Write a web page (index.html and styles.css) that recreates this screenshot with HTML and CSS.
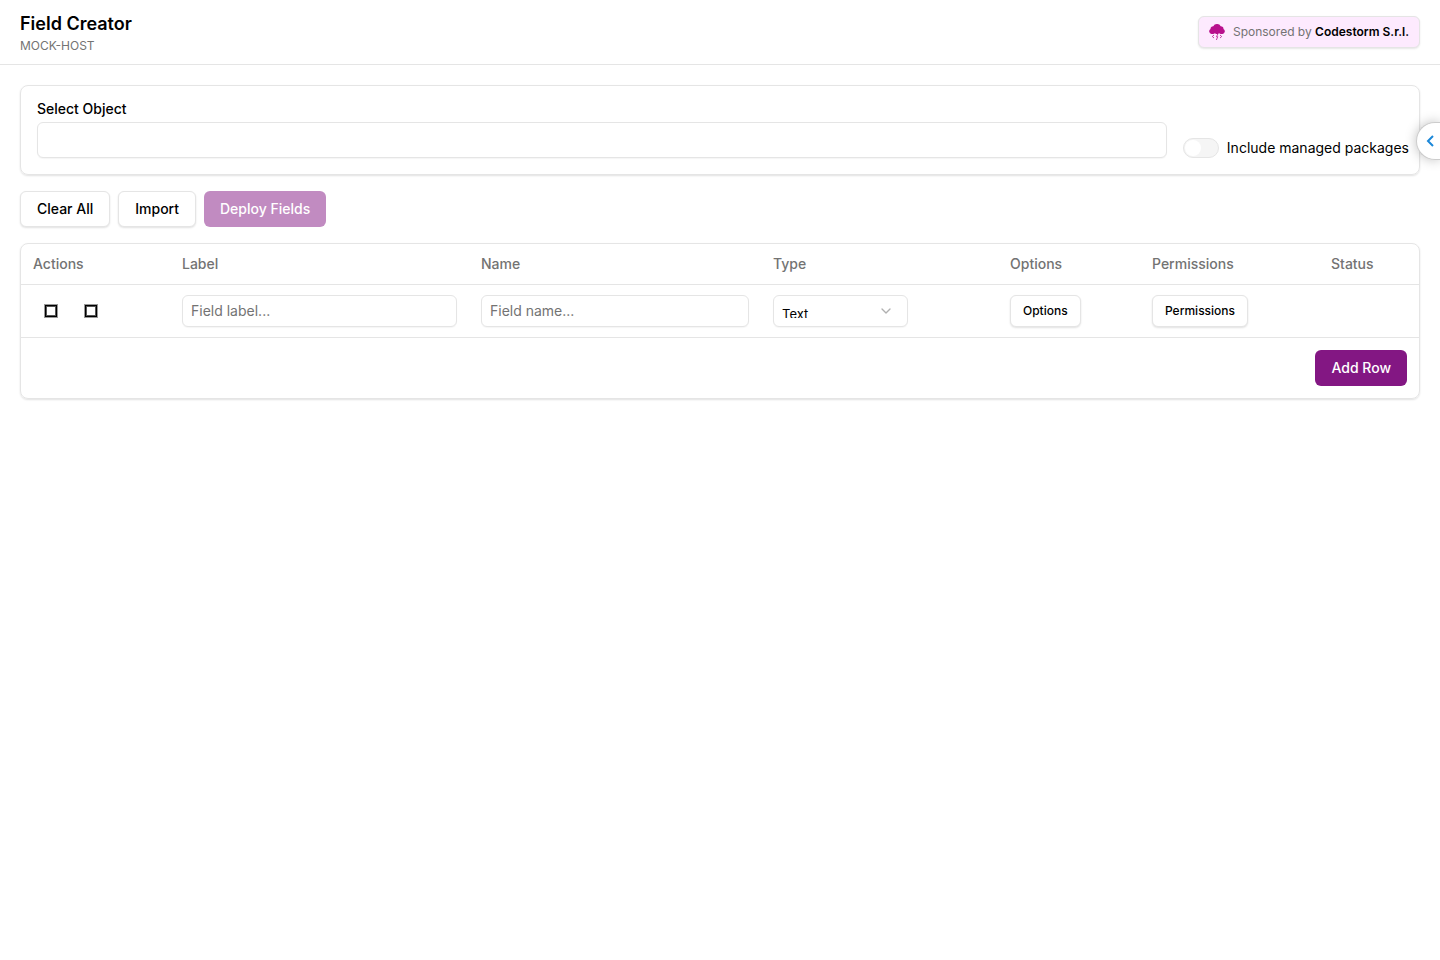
FILE: index.html
```html
<!DOCTYPE html>
<html lang="en">
<head>
<meta charset="utf-8">
<title>Field Creator</title>
<link rel="stylesheet" href="styles.css">
</head>
<body>
<header class="topbar">
  <div>
    <h1 class="title">Field Creator</h1>
    <p class="host">MOCK-HOST</p>
  </div>
  <a class="sponsor" href="#">
    <svg class="sponsor-logo" viewBox="0 0 16 16" aria-hidden="true">
      <path fill="#b8108c" d="M2.500 10A2.700 2.700 0 0 1 1.500 5 2.800 2.800 0 0 1 4.300 2.300 4 4 0 0 1 8 0a4 4 0 0 1 3.700 2.200A2.800 2.800 0 0 1 14.500 5a2.700 2.700 0 0 1-1 5h-1.800L10 9.300 9 10H7L6 9.300 4.300 10z"/>
      <path fill="none" stroke="#b8108c" stroke-width=".8" d="M5 11 3.300 12.500 5 14M11 11l1.700 1.500L11 14M8.800 10 7.500 12.700h1.200L7.400 16"/>
    </svg>
    <span>Sponsored by <strong>Codestorm S.r.l.</strong></span>
  </a>
</header>
<main class="content">
  <section class="card object-card">
    <div class="object-field">
      <label class="field-label" for="object">Select Object</label>
      <input class="input" id="object" type="text">
    </div>
    <label class="switch-label"><input class="switch" type="checkbox" role="switch">Include managed packages</label>
  </section>
  <div class="toolbar">
    <button class="btn" type="button">Clear All</button>
    <button class="btn" type="button">Import</button>
    <button class="btn btn-primary" type="button" disabled>Deploy Fields</button>
  </div>
  <section class="card">
    <table class="fields">
      <colgroup>
        <col class="col-actions"><col class="col-label"><col class="col-name"><col class="col-type"><col class="col-options"><col class="col-permissions"><col class="col-status">
      </colgroup>
      <thead>
        <tr><th>Actions</th><th>Label</th><th>Name</th><th>Type</th><th>Options</th><th>Permissions</th><th>Status</th></tr>
      </thead>
      <tbody>
        <tr>
          <td>
            <div class="row-actions">
              <button class="icon-btn" type="button" aria-label="Clone row"><span class="glyph"></span></button>
              <button class="icon-btn" type="button" aria-label="Delete row"><span class="glyph"></span></button>
            </div>
          </td>
          <td><input class="input input-sm" type="text" placeholder="Field label..." aria-label="Field label"></td>
          <td><input class="input input-sm" type="text" placeholder="Field name..." aria-label="Field name"></td>
          <td>
            <div class="select-wrap">
              <select class="select" aria-label="Field type"><option>Text</option></select>
              <svg class="chevron" viewBox="0 0 24 24" aria-hidden="true"><path d="m6 9 6 6 6-6"/></svg>
            </div>
          </td>
          <td><button class="btn btn-sm" type="button">Options</button></td>
          <td><button class="btn btn-sm" type="button">Permissions</button></td>
          <td></td>
        </tr>
      </tbody>
    </table>
    <div class="card-footer"><button class="btn btn-primary" type="button">Add Row</button></div>
  </section>
</main>
<button class="side-tab" type="button" aria-label="Open panel">
  <svg class="side-arrow" viewBox="0 0 10 14" aria-hidden="true"><path d="M7 2 2 7l5 5"/></svg>
</button>
</body>
</html>
```
FILE: styles.css
```css
* { box-sizing: border-box; }
body {
  margin: 0;
  background: #fff;
  color: #000;
  font: 14px/20px Inter, "Liberation Sans", sans-serif;
}
button, input, select { font: inherit; color: inherit; }
.topbar {
  display: flex;
  align-items: center;
  justify-content: space-between;
  padding: 10px 20px;
  border-bottom: 1px solid #e5e5e5;
}
.title { margin: 0; font-size: 18px; line-height: 28px; font-weight: 600; }
.host { margin: 0; font-size: 12px; line-height: 16px; color: #737373; }
.sponsor {
  display: flex;
  align-items: center;
  gap: 8px;
  height: 32px;
  padding: 0 10px;
  border: 1px solid #e5e5e5;
  border-radius: 6px;
  background: #fdeafe;
  box-shadow: 0 1px 2px rgba(0, 0, 0, 0.1);
  color: #737373;
  font-size: 12px;
  text-decoration: none;
}
.sponsor strong { color: #000; font-weight: 600; }
.sponsor-logo { width: 16px; height: 16px; }
.content { display: flex; flex-direction: column; gap: 16px; padding: 20px; }
.card {
  border: 1px solid #e5e5e5;
  border-radius: 8px;
  box-shadow: 0 1px 2px rgba(0, 0, 0, 0.12);
}
.object-card { display: flex; align-items: flex-end; gap: 16px; padding: 16px 10px 16px 16px; }
.object-field { display: flex; flex: 1; flex-direction: column; gap: 6px; }
.field-label { line-height: 14px; font-weight: 500; }
.input {
  width: 100%;
  height: 36px;
  padding: 0 8px;
  border: 1px solid #e5e5e5;
  border-radius: 6px;
  background: #fff;
  box-shadow: 0 1px 1px rgba(0, 0, 0, 0.04);
}
.input-sm { display: block; height: 32px; }
.input::placeholder { color: #737373; }
.switch-label { display: flex; align-items: center; gap: 8px; }
.switch {
  display: flex;
  align-items: center;
  appearance: none;
  width: 36px;
  height: 20px;
  margin: 0;
  padding: 1px;
  border: 1px solid #e5e5e5;
  border-radius: 10px;
  background: #f5f5f5;
}
.switch::before { content: ""; width: 16px; height: 16px; border-radius: 50%; background: #fff; }
.switch:checked { justify-content: flex-end; background: #86198f; }
.toolbar { display: flex; gap: 8px; }
.btn {
  height: 36px;
  padding: 0 16px;
  border: 1px solid #e5e5e5;
  border-radius: 6px;
  background: #fff;
  box-shadow: 0 1px 2px rgba(0, 0, 0, 0.12);
  font-weight: 500;
}
.btn-sm { display: block; height: 32px; padding: 0 12px; font-size: 12px; }
.btn-primary { border: 0; background: #831783; box-shadow: none; color: #fff; }
.btn-primary:disabled { background: #c18bc1; }
.fields { width: 100%; table-layout: fixed; border-collapse: collapse; }
.fields tr { border-bottom: 1px solid #e5e5e5; }
.fields th { height: 40px; padding: 0 12px; color: #737373; font-weight: 500; text-align: left; }
.fields td { padding: 10px 12px; }
.col-actions { width: 149px; }
.col-label { width: 299px; }
.col-name { width: 292px; }
.col-type { width: 237px; }
.col-options { width: 142px; }
.col-permissions { width: 179px; }
.col-status { width: 100px; }
.row-actions { display: flex; gap: 4px; }
.icon-btn {
  display: flex;
  align-items: center;
  justify-content: center;
  width: 36px;
  height: 32px;
  padding: 0;
  border: 0;
  background: none;
}
.glyph {
  width: 14px;
  height: 14px;
  border: 1px solid #999;
  box-shadow: inset 0 0 0 1px #000, inset 0 0 0 2px #555;
}
.select-wrap { position: relative; width: 135px; }
.select {
  display: block;
  appearance: none;
  width: 100%;
  height: 32px;
  padding: 8px;
  border: 1px solid #e5e5e5;
  border-radius: 6px;
  background: #fff;
  box-shadow: 0 1px 1px rgba(0, 0, 0, 0.04);
  font-size: 13px;
  line-height: 20px;
}
.chevron {
  position: absolute;
  top: 8px;
  right: 14px;
  width: 16px;
  height: 16px;
  fill: none;
  stroke: #b0b0b0;
  stroke-width: 2;
  stroke-linecap: round;
  stroke-linejoin: round;
  pointer-events: none;
}
.card-footer { display: flex; justify-content: flex-end; padding: 12px; }
.side-tab {
  position: fixed;
  top: 122px;
  right: 0;
  display: flex;
  align-items: center;
  width: 24px;
  height: 38px;
  padding: 0 0 0 9px;
  border: 1px solid #ccc;
  border-right: 0;
  border-radius: 19px 0 0 19px;
  background: #fff;
  box-shadow: 0 0 12px rgba(0, 0, 0, 0.25);
}
.side-arrow { width: 10px; height: 14px; fill: none; stroke: #1b87d8; stroke-width: 2; }
```
